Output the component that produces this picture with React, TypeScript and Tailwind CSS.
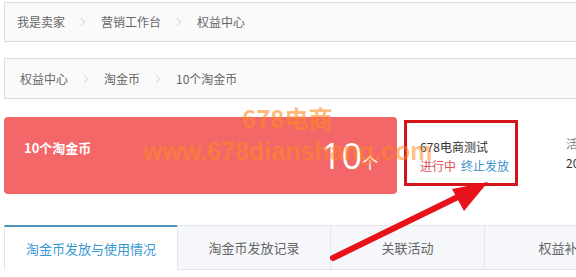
import { ChevronRight } from 'lucide-react';

const font = { fontFamily: '"Noto Sans CJK SC", "Liberation Sans", sans-serif' };

function Crumbs({ items, pad }: { items: string[]; pad: string }) {
    return (
        <div className={`flex items-center gap-[11px] ${pad} text-[12px] text-[#666]`}>
            {items.map((t, i) => (
                <div key={t} className="flex items-center gap-[11px]">
                    {i > 0 && <ChevronRight size={14} strokeWidth={1} className="text-[#aaa]" />}
                    <span>{t}</span>
                </div>
            ))}
        </div>
    );
}

const tabs = ['淘金币发放与使用情况', '淘金币发放记录', '关联活动', '权益补发'];
const tabWidths = ['w-[173px]', 'w-[153px]', 'w-[154px]', 'w-[160px]'];

export default function App() {
    return (
        <div className="relative w-[576px] h-[277px] overflow-hidden bg-white" style={font}>
            {/* breadcrumb 1 */}
            <div className="ml-[4px] mt-[2px] w-[700px] h-[40px] border border-[#ddd] bg-[#fafafa] flex items-center">
                <Crumbs items={['我是卖家', '营销工作台', '权益中心']} pad="pl-[12px]" />
            </div>

            {/* breadcrumb 2 */}
            <div className="ml-[4px] mt-[16px] w-[700px] h-[41px] border border-[#ddd] bg-[#fafafa] flex items-center">
                <Crumbs items={['权益中心', '淘金币', '10个淘金币']} pad="pl-[15px]" />
            </div>

            {/* summary row */}
            <div className="ml-[4px] mt-[18px] flex items-start w-[700px]">
                <div className="shrink-0 w-[393px] h-[77px] rounded-[4px] bg-[#f36769] flex items-start justify-between pl-[20px] pr-[19px] text-white">
                    <span className="mt-[21px] text-[13px] font-bold">10个淘金币</span>
                    <span className="mt-[21px] flex items-baseline">
                        <span className="text-[36px] leading-none" style={{ fontFamily: '"Open Sans", sans-serif' }}>10</span>
                        <span className="text-[16px]">个</span>
                    </span>
                </div>
                <div className="shrink-0 ml-[7px] mt-[3px] w-[114px] h-[66px] border-[3px] border-[#d4141b] pl-[13px] pt-[14px] text-[12px] leading-[19px] whitespace-nowrap">
                    <div className="text-[#333]">678电商测试</div>
                    <div className="flex gap-[5px]">
                        <span className="text-[#e2515a]">进行中</span>
                        <span className="text-[#3d8fc8]">终止发放</span>
                    </div>
                </div>
                <div className="shrink-0 ml-[48px] mt-[17px] text-[12px] leading-[19px] whitespace-nowrap">
                    <div className="text-[#888]">活动时间</div>
                    <div className="text-[#333]">2019</div>
                </div>
            </div>

            {/* tabs */}
            <div className="ml-[4px] mt-[31px] flex h-[45px] text-[13px] w-[700px]">
                {tabs.map((t, i) => (
                    <div
                        key={t}
                        className={`${tabWidths[i]} shrink-0 flex items-center justify-center ${
                            i === 0
                                ? 'bg-white border-t-2 border-t-[#4f93bd] border-l border-l-[#e5e5e5] text-[#3a97d4]'
                                : 'bg-[#f5f7fa] border-t border-b border-l border-[#e3e6ea] text-[#666]'
                        }`}
                    >
                        {t}
                    </div>
                ))}
            </div>

            {/* watermark */}
            <div className="absolute left-[242px] top-[106px] text-[24px] font-bold text-[#ff8a1c]/60 leading-none pointer-events-none">
                678电商
            </div>
            <div
                className="absolute left-[143px] top-[139px] text-[25px] font-bold text-[#ff8a1c]/55 leading-none pointer-events-none"
                style={{ fontFamily: '"Liberation Sans", sans-serif' }}
            >
                www.678dianshang.com
            </div>

            {/* annotation arrow */}
            <svg className="absolute left-0 top-0 pointer-events-none" width="576" height="277">
                <line x1="333" y1="258" x2="466" y2="193" stroke="#e8121a" strokeWidth="6" strokeLinecap="round" />
                <polygon points="488,182 452,189 464,211" fill="#e8121a" />
            </svg>
        </div>
    );
}
